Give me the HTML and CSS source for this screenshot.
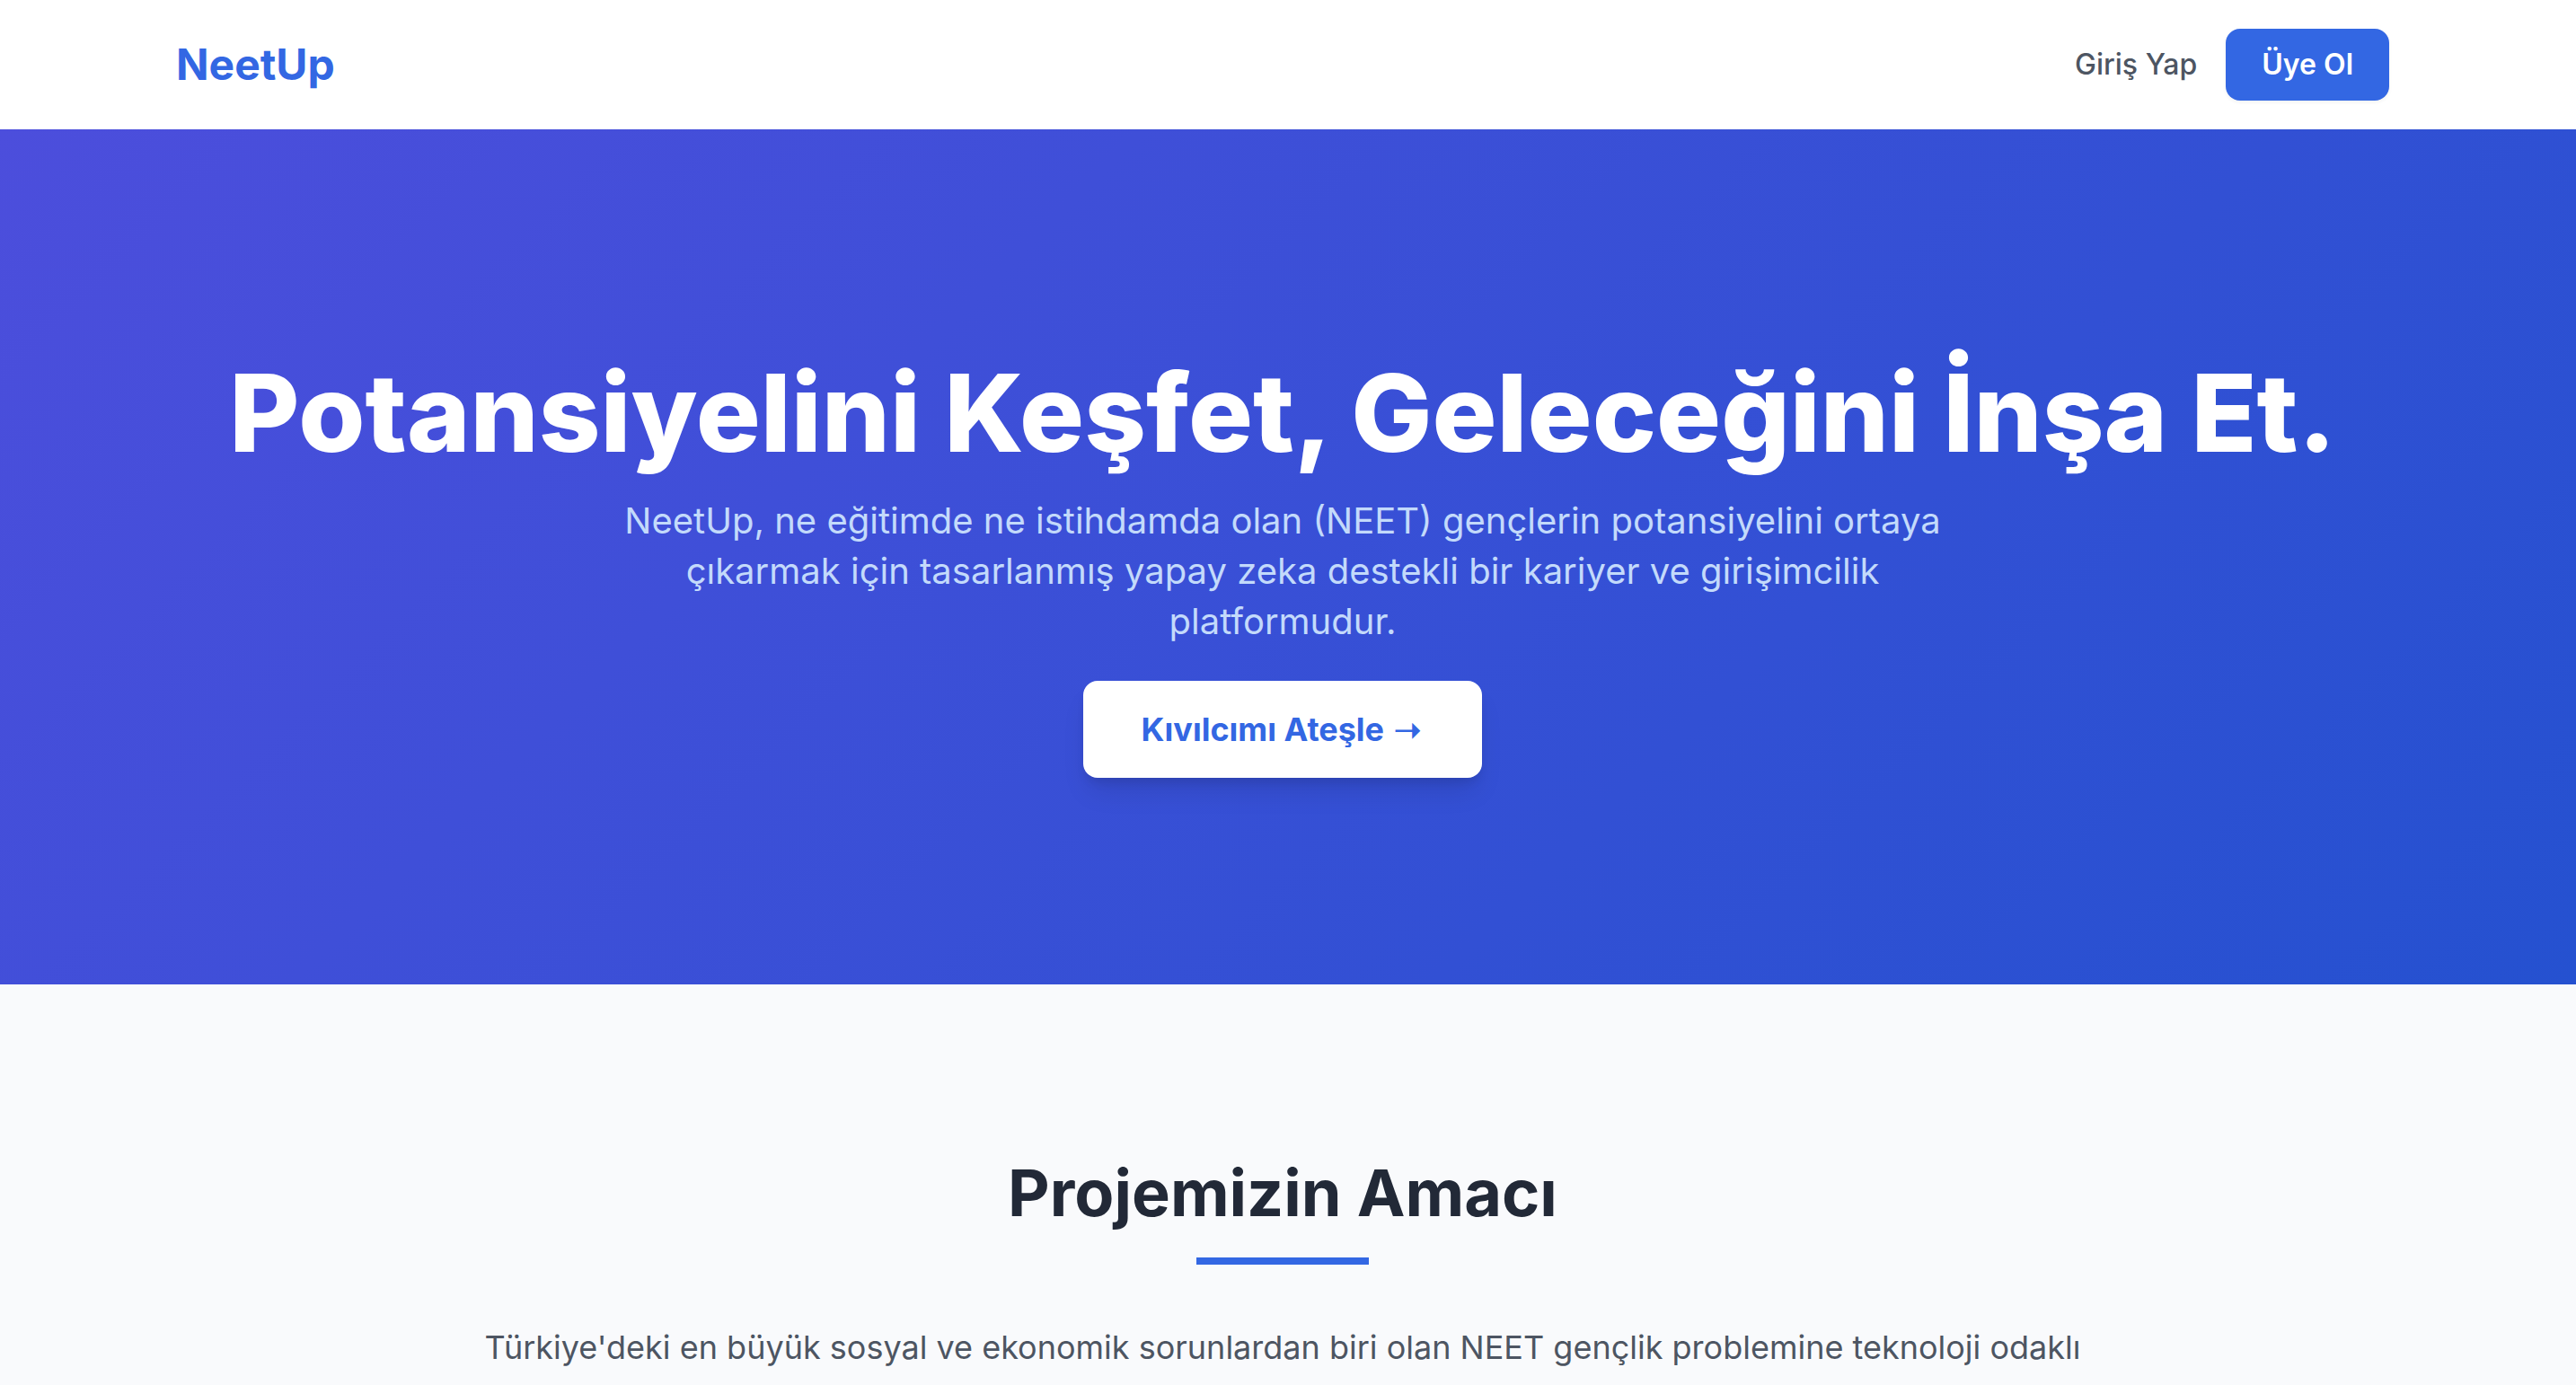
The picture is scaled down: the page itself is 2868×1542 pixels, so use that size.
FILE: index.html
```html
<!DOCTYPE html>
<html lang="tr">
<head>
<meta charset="UTF-8">
<meta name="viewport" content="width=device-width, initial-scale=1">
<title>NeetUp</title>
<link rel="stylesheet" href="styles.css">
</head>
<body>
<header class="site-header">
  <nav class="nav">
    <a class="logo" href="#">NeetUp</a>
    <div class="nav-actions">
      <a class="login" href="#">Giriş Yap</a>
      <a class="signup" href="#">Üye Ol</a>
    </div>
  </nav>
</header>
<main>
  <section class="hero">
    <h1 class="hero-title">Potansiyelini Keşfet, Geleceğini İnşa Et.</h1>
    <p class="hero-text">NeetUp, ne eğitimde ne istihdamda olan (NEET) gençlerin potansiyelini ortaya çıkarmak için tasarlanmış yapay zeka destekli bir kariyer ve girişimcilik platformudur.</p>
    <a class="cta" href="#">Kıvılcımı Ateşle <span class="cta-arrow">➝</span></a>
  </section>
  <section class="about">
    <h2 class="about-title">Projemizin Amacı</h2>
    <p class="about-text">Türkiye'deki en büyük sosyal ve ekonomik sorunlardan biri olan NEET gençlik problemine teknoloji odaklı</p>
  </section>
</main>
</body>
</html>
```
FILE: styles.css
```css
* { box-sizing: border-box; margin: 0; padding: 0; }
body { font-family: Inter, "Noto Sans", sans-serif; background: #f9fafc; color: #1f2937; }
a { text-decoration: none; }

.site-header { background: #fff; padding-right: 12px; }
.nav { max-width: 2560px; margin: 0 auto; padding: 32px 48px; display: flex; justify-content: space-between; align-items: center; }
.logo { font-size: 48px; line-height: 64px; font-weight: 700; color: #3367e3; }
.nav-actions { display: flex; align-items: center; gap: 32px; }
.login { font-size: 32px; line-height: 48px; font-weight: 500; color: #4d5562; }
.signup { font-size: 32px; line-height: 48px; font-weight: 600; color: #fff; background: #3367e3; padding: 16px 40px; border-radius: 16px; box-shadow: 0 2px 4px rgba(0, 0, 0, .05); }

.hero { background: linear-gradient(135deg, #4c4edc, #2551d0); color: #fff; text-align: center; padding: 256px 60px 230px 48px; display: flex; flex-direction: column; align-items: center; }
.hero-title { font-size: 120px; line-height: 120px; font-weight: 800; }
.hero-text { max-width: 1536px; font-size: 40px; line-height: 56px; color: #c3dafb; margin: 32px 0 38px; }
.cta { font-size: 36px; line-height: 56px; font-weight: 700; color: #3367e3; background: #fff; padding: 26px 64px; border-radius: 16px; box-shadow: 0 20px 30px -6px rgba(0, 0, 0, .1), 0 8px 12px -4px rgba(0, 0, 0, .1); }
.cta-arrow { margin: 0 4px 0 2px; }

.about { text-align: center; padding: 192px 60px 0 48px; display: flex; flex-direction: column; align-items: center; }
.about-title { font-size: 72px; line-height: 80px; font-weight: 700; color: #222937; }
.about-title::after { content: ""; display: block; width: 192px; height: 8px; margin: 32px auto 0; background: #3367e3; }
.about-text { max-width: 1792px; font-size: 36px; line-height: 56px; color: #4d5562; margin-top: 64px; }
```
